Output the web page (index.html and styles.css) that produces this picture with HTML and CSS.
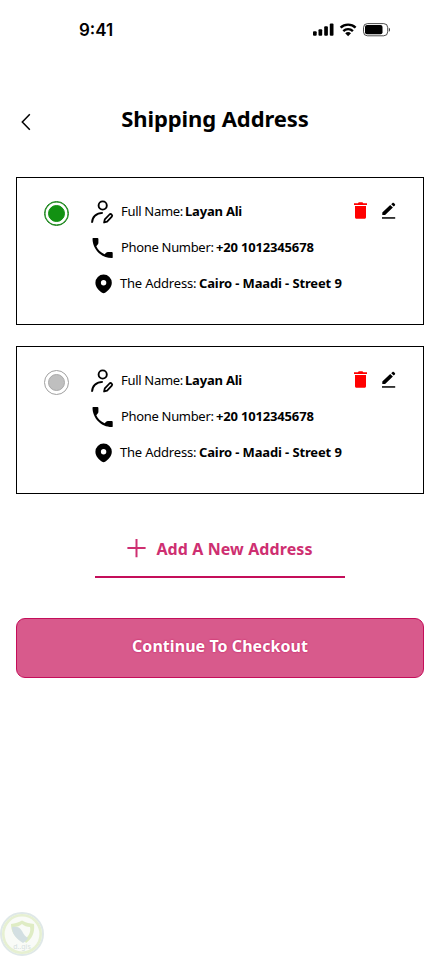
FILE: index.html
```html
<!DOCTYPE html>
<html lang="en">
<head>
<meta charset="utf-8">
<title>Shipping Address</title>
<link rel="stylesheet" href="styles.css">
</head>
<body>
<svg class="sprite" aria-hidden="true">
  <symbol id="user" viewBox="0 0 24 26"><g fill="none" stroke="#000" stroke-width="1.900"><circle cx="11.700" cy="5.500" r="4.100"/><path d="M1 22.800c.1-5.600 4-9.900 10.800-9.900"/><path d="M13.800 19.400l4.700-4.900c1.500-1.200 3.500.6 2.300 2.200l-4.700 4.900-3 .9z" stroke-width="1.800" stroke-linejoin="round"/></g></symbol>
  <symbol id="phone" viewBox="0 0 22 22"><path d="M.5 1.600C.5 1.200.8 1 1.200 1h4.300c.6 0 .9.300.9.900v3.800c0 .8-.2 1.300-.7 1.900L4.300 9.200c1.500 3.500 4.600 6.500 8.300 8l1.500-1.500c.6-.5 1.100-.7 1.900-.7h3.800c.6 0 .9.300.9.900v4.300c0 .6-.3.900-.9.900C9.200 21.100.5 12.400.5 1.600z"/></symbol>
  <symbol id="pin" viewBox="0 0 18 20"><path fill-rule="evenodd" d="M8.600.5A8.200 8.200 0 0 0 .4 8.700C.4 13.500 4.300 16.800 7.100 18.700c.9.600 2.100.6 3 0 2.800-1.900 6.700-5.200 6.700-10A8.200 8.200 0 0 0 8.600.5zm0 5.600a2.700 2.700 0 1 1 0 5.400 2.700 2.700 0 0 1 0-5.400z"/></symbol>
  <symbol id="trash" viewBox="0 0 14 18"><path fill="#f00" d="M0 1.200h3.900L4.800.3h3.600l.9.900h3.700v1.700H0zM1 4h11v11.200c0 .9-.6 1.500-1.500 1.500h-8C1.600 16.700 1 16.100 1 15.200z"/></symbol>
  <symbol id="edit" viewBox="0 0 16 18"><path d="M1.300 10.400l7.900-7.500 2.700 2.700-7.800 7.400H1.300zM10.200 2.200l1.300-1.200c.4-.4.900-.4 1.300 0l1.100 1.100c.4.400.4.900 0 1.300l-1.200 1.200z"/><path d="M1 15.200h13.200v1.500H1z"/></symbol>
</svg>

<header class="status">
  <span class="time">9:41</span>
  <svg class="indicators" width="78" height="14" viewBox="0 0 78 14">
    <g><rect x="0" y="8.300" width="3.700" height="4.500" rx="1"/><rect x="5.500" y="6.300" width="3.700" height="6.500" rx="1"/><rect x="11.200" y="3.300" width="3.700" height="9.500" rx="1"/><rect x="16.800" y=".6" width="3.700" height="12.200" rx="1"/></g>
    <g fill="none" stroke="#000" stroke-width="2.400"><path d="M27.600 4.600a10.900 10.900 0 0 1 15 0"/><path d="M30.300 8.100a6.900 6.900 0 0 1 9.600 0"/></g>
    <path d="M32.200 10.200a4.400 4.400 0 0 1 5.800 0L35.100 13.200z"/>
    <rect x="50.500" y=".6" width="24.200" height="12.200" rx="4" fill="none" stroke="#000" stroke-opacity=".7"/>
    <rect x="52" y="2.100" width="17.500" height="9.200" rx="2"/>
    <path d="M75.900 4.700c1.500.7 1.500 3.400 0 4.100z" fill-opacity=".8"/>
  </svg>
</header>

<div class="titlebar">
  <svg class="back" width="12" height="20" viewBox="0 0 12 20"><path d="M9.800 2.300L2.300 10l7.500 7.700" fill="none" stroke="#000" stroke-width="1.500"/></svg>
  <h1>Shipping Address</h1>
</div>

<main>
  <section class="card">
    <span class="radio selected"></span>
    <div class="details">
      <p><svg class="user"><use href="#user"/></svg><span class="label name">Full Name:</span><b class="v-name">Layan Ali</b></p>
      <p><svg class="phone"><use href="#phone"/></svg><span class="label tel">Phone Number:</span><b class="v-tel">+20 1012345678</b></p>
      <p><svg class="pin"><use href="#pin"/></svg><span class="label addr">The Address:</span><b class="v-addr">Cairo - Maadi - Street 9</b></p>
    </div>
    <div class="actions"><svg class="trash"><use href="#trash"/></svg><svg class="edit"><use href="#edit"/></svg></div>
  </section>
  <section class="card">
    <span class="radio"></span>
    <div class="details">
      <p><svg class="user"><use href="#user"/></svg><span class="label name">Full Name:</span><b class="v-name">Layan Ali</b></p>
      <p><svg class="phone"><use href="#phone"/></svg><span class="label tel">Phone Number:</span><b class="v-tel">+20 1012345678</b></p>
      <p><svg class="pin"><use href="#pin"/></svg><span class="label addr">The Address:</span><b class="v-addr">Cairo - Maadi - Street 9</b></p>
    </div>
    <div class="actions"><svg class="trash"><use href="#trash"/></svg><svg class="edit"><use href="#edit"/></svg></div>
  </section>

  <a class="add"><svg width="20" height="20" viewBox="0 0 20 20"><path d="M9.500 0v18.200M.4 9.100h18.200" stroke="#ce2f71" stroke-width="2"/></svg><span>Add A New Address</span></a>
  <button class="checkout">Continue To Checkout</button>
</main>

<svg class="badge" width="44" height="44" viewBox="0 0 44 44">
  <circle cx="22" cy="22" r="21" fill="#f9fbf7" stroke="#dfe8e8" stroke-width="2"/>
  <circle cx="22" cy="22" r="18.700" fill="none" stroke="#e6f0d2" stroke-width="2.600"/>
  <path d="M22 8.500c4 2.500 8 3 12 3.500 1 9-2 14.500-8 19l-2-3c5-4 7-8 6-13-3-.3-6-1-8-3-2 2-5 2.700-8 3 0 6 2 10 6 13-6-4-9-9-9-16 4-.5 8-1.500 11-3.500z" fill="#dfecc4"/>
  <path d="M12 15c5-1 8 0 10 4 2 4 4 6 6 7-1 2-3 4-5 5-6-4-11-8-11-16z" fill="#d3dfe2"/>
  <text x="22" y="37" text-anchor="middle">d..gis</text>
</svg>
</body>
</html>
```
FILE: styles.css
```css
* { box-sizing: border-box; }
body {
  margin: 0;
  height: 956px;
  overflow: hidden;
  display: flex;
  flex-direction: column;
  background: #fff;
  color: #000;
  font-family: "Noto Sans", sans-serif;
}
svg { display: block; flex: none; }
.sprite { position: absolute; width: 0; height: 0; }

.status {
  display: flex;
  align-items: center;
  justify-content: space-between;
  height: 60px;
  padding: 0 49px 0 79px;
}
.time { font: 600 17px "Inter", sans-serif; }

.titlebar {
  display: grid;
  grid-template-columns: 40px 1fr 40px;
  align-items: center;
  height: 117px;
  padding: 0 20px 0 10px;
}
.back { margin: 6px 0 0 10px; }
h1 {
  margin: -1px 0 0;
  text-align: center;
  font-size: 22px;
  line-height: 30px;
  letter-spacing: -.1px;
}

main {
  display: flex;
  flex-direction: column;
  gap: 21px;
  padding: 0 16px;
}
.card {
  display: flex;
  align-items: flex-start;
  height: 148px;
  padding: 0 26px 0 27px;
  border: 1px solid #000;
}
.radio {
  display: grid;
  place-items: center;
  width: 25px;
  height: 25px;
  margin-top: 23px;
  border: 1.5px solid #a0a0a0;
  border-radius: 50%;
}
.radio::before {
  content: "";
  width: 15px;
  height: 15px;
  border: 1px solid #aaa;
  border-radius: 50%;
  background: #bfbfbf;
}
.radio.selected { border-color: #0a7d0a; box-shadow: inset 0 0 0 .5px #0a7d0a; }
.radio.selected::before { background: #129112; border-color: #129112; }

.details { margin-left: 22px; padding-top: 15px; }
.details p {
  display: flex;
  align-items: center;
  height: 36px;
  margin: 0;
  font-size: 13px;
  line-height: 18px;
  white-space: nowrap;
}
.user { width: 24px; height: 26px; margin: 3px 6px 0 0; }
.phone { width: 22px; height: 22px; margin: 2px 7px 0 1px; }
.pin { width: 18px; height: 20px; margin: 1px 7px 0 4px; }
.name { width: 64px; letter-spacing: -.3px; }
.tel { width: 95px; letter-spacing: -.32px; }
.addr { width: 79px; letter-spacing: -.2px; }
.v-name { letter-spacing: -.2px; }
.v-tel { letter-spacing: -.17px; }
.v-addr { letter-spacing: -.13px; }

.actions { display: flex; gap: 13px; margin: 24px 0 0 auto; }
.trash { width: 14px; height: 18px; }
.edit { width: 16px; height: 18px; }

.add {
  display: flex;
  align-items: center;
  justify-content: center;
  align-self: center;
  gap: 9px;
  width: 250px;
  height: 44px;
  margin-top: 19px;
  border-bottom: 2px solid #c40e5a;
  color: #ce2f71;
  font-size: 16px;
  font-weight: 700;
  line-height: 20px;
  letter-spacing: .1px;
}
.add svg, .add span { margin-top: -13px; }
.checkout {
  height: 60px;
  margin: 19px 0 0;
  padding: 0 0 4px;
  border: 1px solid #c40e5a;
  border-radius: 9px;
  background: #d85a8c;
  color: #fff;
  font: 700 16px "Noto Sans", sans-serif;
  letter-spacing: .05px;
  text-shadow: 0 0 2px #c40e5a;
}
.badge { position: absolute; left: 0; top: 912px; }
.badge text { fill: #d6dfdf; font-size: 7px; }
```
